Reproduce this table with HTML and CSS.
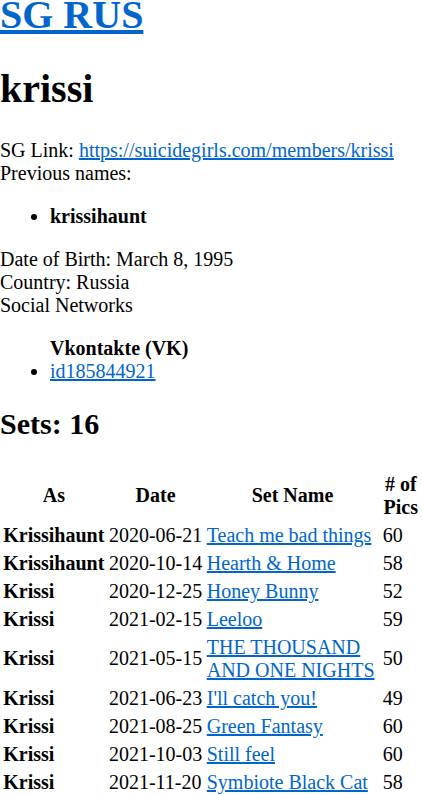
FILE: index.html
```html
<!DOCTYPE html>
<html lang="en">
<head>
<meta charset="utf-8">
<title>krissi - SG RUS</title>
<link rel="stylesheet" href="styles.css">
</head>
<body>
<h1 class="site-title"><a href="#">SG RUS</a></h1>
<h1 class="model-name">krissi</h1>
<div class="info">SG Link: <a href="#">https://suicidegirls.com/members/krissi</a></div>
<div class="info">Previous names:</div>
<ul class="list">
  <li><b>krissihaunt</b></li>
</ul>
<div class="info">Date of Birth: March 8, 1995</div>
<div class="info">Country: Russia</div>
<div class="info">Social Networks</div>
<ul class="list social">
  <li class="network-name">Vkontakte (VK)</li>
  <li><a href="#">id185844921</a></li>
</ul>
<h2 class="sets-title">Sets: 16</h2>
<table class="sets">
  <thead>
    <tr><th>As</th><th>Date</th><th>Set Name</th><th># of Pics</th></tr>
  </thead>
  <tbody>
    <tr><td class="as">Krissihaunt</td><td class="date">2020-06-21</td><td class="name"><a href="#">Teach me bad things</a></td><td>60</td></tr>
    <tr><td class="as">Krissihaunt</td><td class="date">2020-10-14</td><td class="name"><a href="#">Hearth &amp; Home</a></td><td>58</td></tr>
    <tr><td class="as">Krissi</td><td class="date">2020-12-25</td><td class="name"><a href="#">Honey Bunny</a></td><td>52</td></tr>
    <tr><td class="as">Krissi</td><td class="date">2021-02-15</td><td class="name"><a href="#">Leeloo</a></td><td>59</td></tr>
    <tr><td class="as">Krissi</td><td class="date">2021-05-15</td><td class="name long"><a href="#">THE THOUSAND AND ONE NIGHTS</a></td><td>50</td></tr>
    <tr><td class="as">Krissi</td><td class="date">2021-06-23</td><td class="name"><a href="#">I'll catch you!</a></td><td>49</td></tr>
    <tr><td class="as">Krissi</td><td class="date">2021-08-25</td><td class="name"><a href="#">Green Fantasy</a></td><td>60</td></tr>
    <tr><td class="as">Krissi</td><td class="date">2021-10-03</td><td class="name"><a href="#">Still feel</a></td><td>60</td></tr>
    <tr><td class="as">Krissi</td><td class="date">2021-11-20</td><td class="name"><a href="#">Symbiote Black Cat</a></td><td>58</td></tr>
  </tbody>
</table>
</body>
</html>
```
FILE: styles.css
```css
html, body {
  margin: 0;
  padding: 0;
  background: #fff;
}
body {
  font-family: "Liberation Serif", "Times New Roman", serif;
  font-size: 20px;
  color: #000;
}
a {
  color: #0066cc;
}
h1 {
  font-size: 40px;
  margin: 26.8px 0;
}
.site-title {
  margin-top: -9px;
}
.list {
  margin: 20px 0;
  padding-left: 50px;
}
.social .network-name {
  list-style: none;
  font-weight: bold;
}
.sets-title {
  font-size: 30px;
  margin: 24.9px 0;
}
.sets {
  border-spacing: 2.5px;
  margin-top: 28px;
}
.sets th, .sets td {
  padding: 1.5px 1.25px;
}
.sets .as {
  font-weight: bold;
  white-space: nowrap;
}
.sets .date,
.sets .name {
  white-space: nowrap;
}
.sets .name.long {
  white-space: normal;
}
```
